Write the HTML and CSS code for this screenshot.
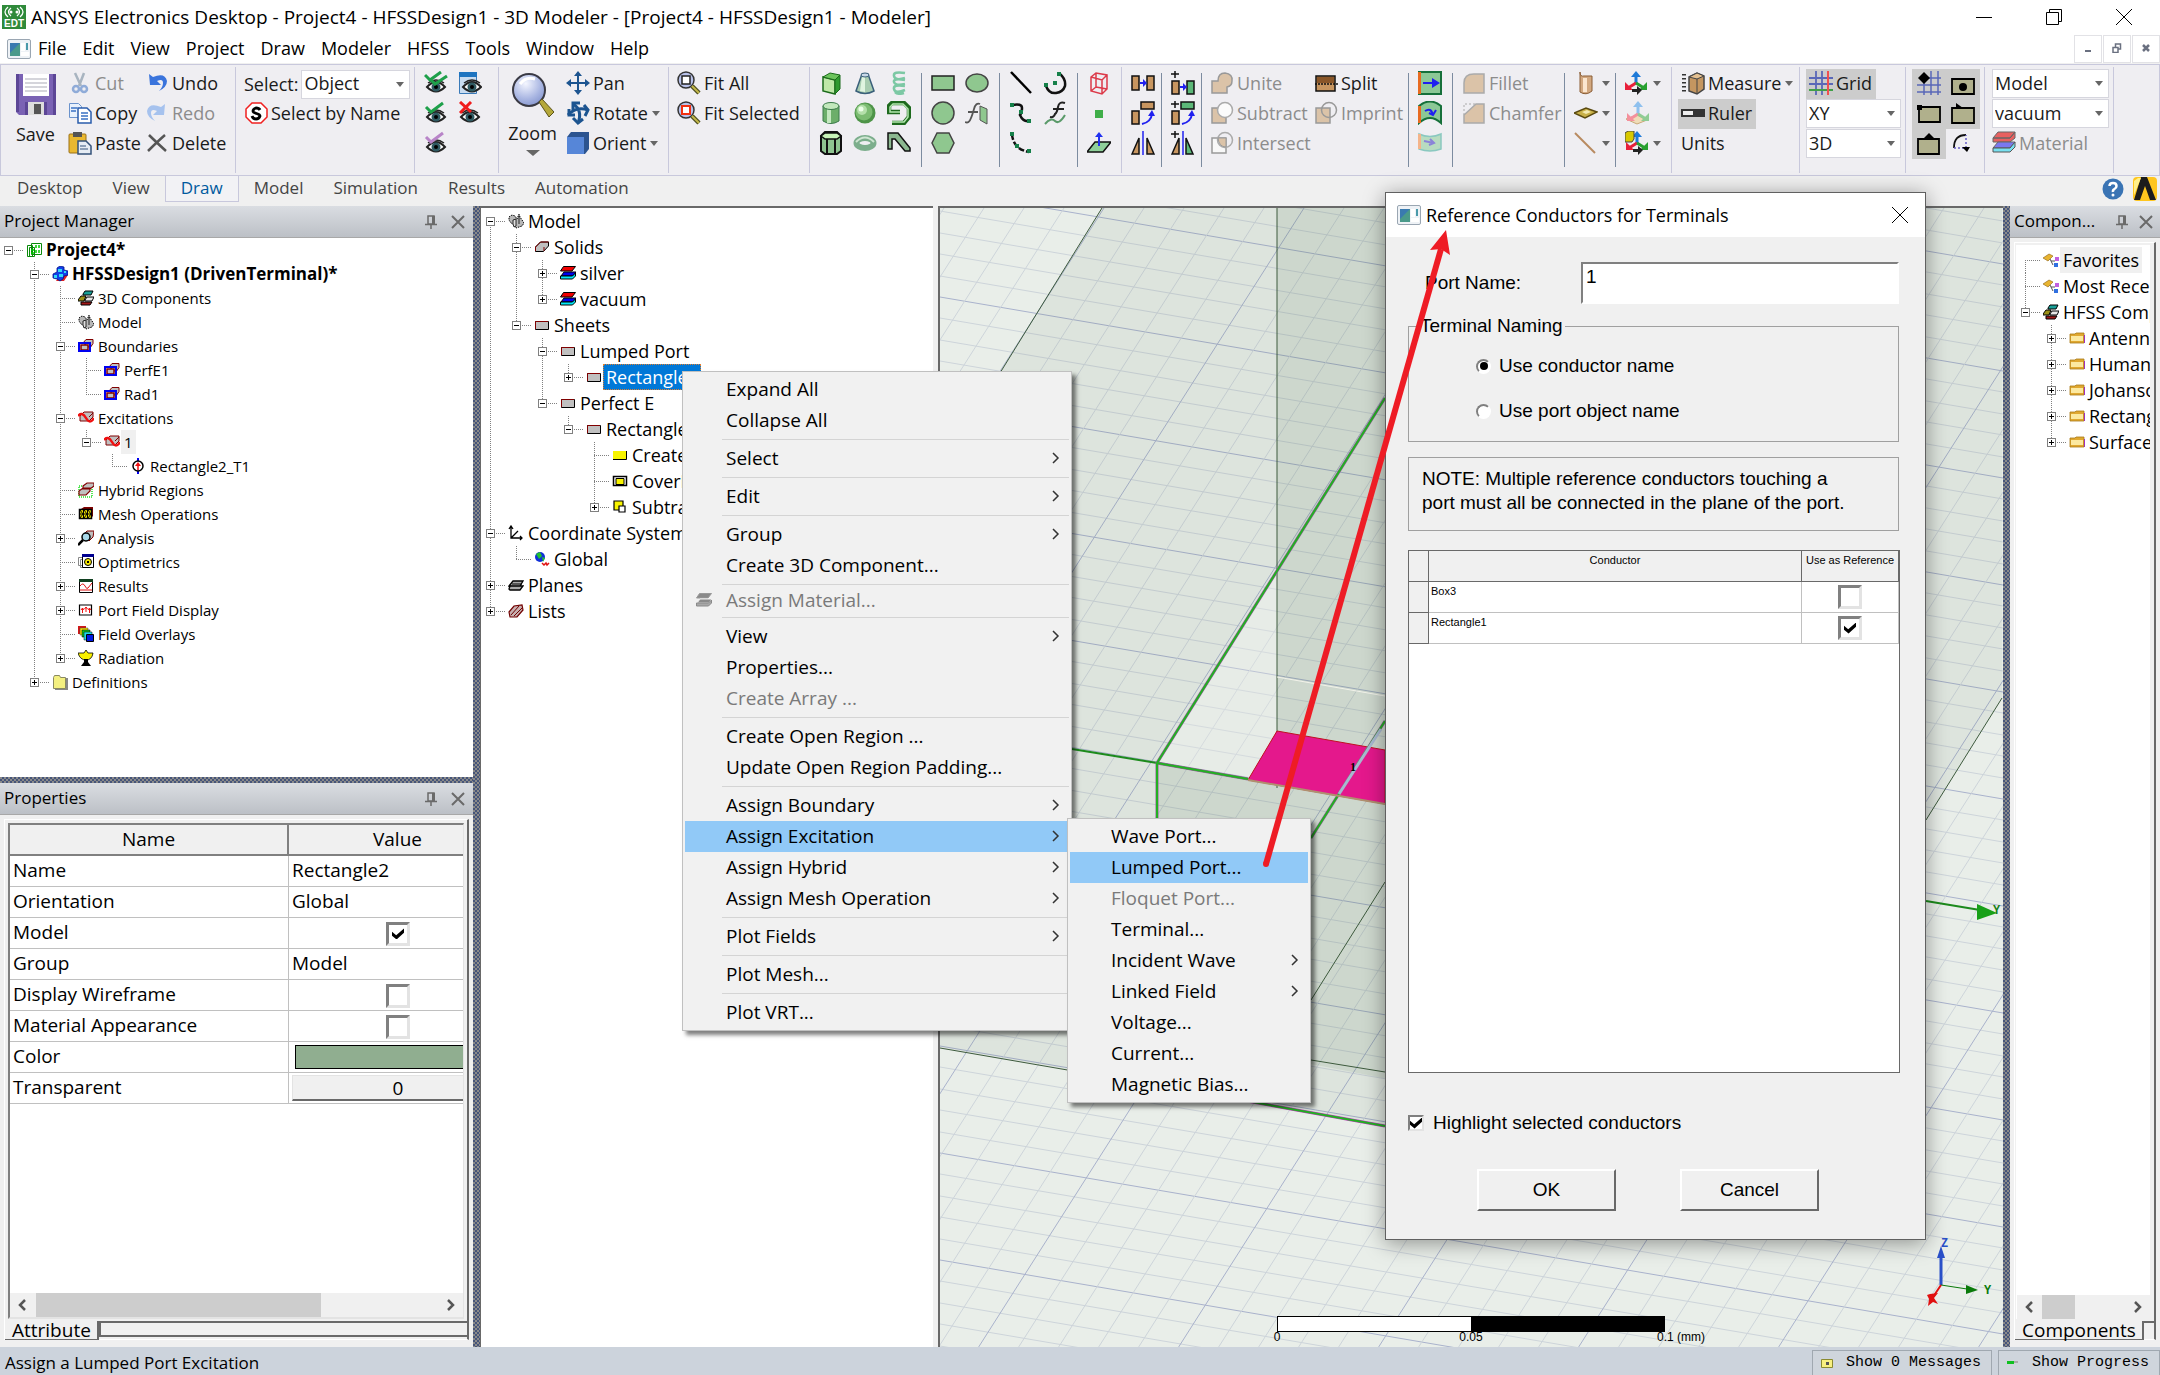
FILE: index.html
```html
<!DOCTYPE html>
<html lang="en">
<head>
<meta charset="utf-8">
<title>ANSYS Electronics Desktop - Project4 - HFSSDesign1 - 3D Modeler</title>
<link rel="stylesheet" href="styles.css">
</head>
<body>
<svg class="sprite" aria-hidden="true">
<defs>
<linearGradient id="gGreen" x1="0" x2="1"><stop offset="0" stop-color="#6aa862"/><stop offset=".4" stop-color="#d3f0cd"/><stop offset="1" stop-color="#3c8a3c"/></linearGradient>
<radialGradient id="gBall" cx=".35" cy=".3" r=".7"><stop offset="0" stop-color="#e8ffe0"/><stop offset=".5" stop-color="#86c47c"/><stop offset="1" stop-color="#357a35"/></radialGradient>
<radialGradient id="gLens" cx=".4" cy=".3" r=".8"><stop offset="0" stop-color="#f4f6ff"/><stop offset=".6" stop-color="#a9b6e2"/><stop offset="1" stop-color="#7f90cc"/></radialGradient>
<linearGradient id="gTan" x1="0" x2="1"><stop offset="0" stop-color="#c79a6c"/><stop offset=".4" stop-color="#fbe6cf"/><stop offset="1" stop-color="#8a5c34"/></linearGradient>
<g id="eye"><path d="M3 16q9-10 18 0q-9 9-18 0z" fill="#fff" stroke="#222" stroke-width="2"/><circle cx="12" cy="16" r="4.500" fill="#2f5a62"/><circle cx="12" cy="16" r="2" fill="#000"/><path d="M4 12q8-6 16 0" fill="none" stroke="#222" stroke-width="1.500"/></g>
<g id="lens"><circle cx="9" cy="9" r="8" fill="#b9c2ea" stroke="#333" stroke-width="1.500"/><path d="M15 15l7 7" stroke="#4c4c20" stroke-width="4.500"/><path d="M15 15l7 7" stroke="#c2b84a" stroke-width="2"/></g>
</defs>
<symbol id="app" viewBox="0 0 24 24"><path fill="#2f8a3a" d="M0 0h24v24H0z"/><path d="M9 3q-5 4 0 8M6 2q-6 5 0 10M15 3q5 4 0 8M18 2q6 5 0 10" fill="none" stroke="#fff" stroke-width="1.300"/><circle cx="9" cy="7" r="1.500" fill="#fff"/><circle cx="15" cy="7" r="1.500" fill="#fff"/><text x="12" y="22" font-size="10" font-weight="bold" font-family="Liberation Sans" text-anchor="middle" fill="#fff">EDT</text></symbol>
<symbol id="doc" viewBox="0 0 24 20"><rect x=".5" y=".5" width="23" height="19" rx="1.500" fill="#eef2f6" stroke="#9aa6b2"/><path fill="#4a9a8a" d="M3 4h10v13H3z"/><path fill="#3a7ab0" d="M3 4h10L3 14z"/><path fill="#fff" d="M14 4h4v8h-4zM14 13h8v4h-8z"/><path fill="#4a9aaa" d="M19 4h2v7h-2z"/></symbol>
<symbol id="save" viewBox="0 0 42 42"><path fill="#7a62b4" d="M1 0h40v41H4l-3-3z"/><path fill="#5c4696" d="M1 0h3v38H1zM38 0h3v41h-3z"/><path fill="#fff" d="M8 0h26v22H8z"/><path stroke="#c8c8d0" stroke-width="1.500" d="M10 5h22M10 9h22M10 13h22M10 17h22"/><path fill="#5c4696" d="M10 28h22v13H10z"/><path fill="#ddd" d="M13 28h16v13H13z"/><path fill="#555" d="M19 30h7v10h-7z"/></symbol>
<symbol id="cut" viewBox="0 0 24 24"><path d="M7 2l6 13M16 2l-5 13" stroke="#a8b4c0" stroke-width="2.500"/><g fill="none" stroke="#8fabd8" stroke-width="2.500"><circle cx="8" cy="18" r="3"/><circle cx="16" cy="18" r="3"/></g></symbol>
<symbol id="copy" viewBox="0 0 24 24"><path fill="#e8f1fc" stroke="#6a92cc" d="M1.500 2.500h9l3 3v11h-12z"/><path fill="#fff" stroke="#2a5cac" stroke-width="1.500" d="M10 7h9l4 4v11H10z"/><path stroke="#3a72c4" stroke-width="1.500" d="M3 7h6M3 10h5M13 12h7M13 15h7M13 18h7"/></symbol>
<symbol id="paste" viewBox="0 0 24 24"><rect x="1" y="3" width="17" height="19" rx="1" fill="#eab830" stroke="#9a7018"/><path fill="#555" d="M5 1h9v5H5z"/><path fill="#e6ecf4" stroke="#35527a" stroke-width="1.500" d="M10 10h8l5 5v8H10z"/><path stroke="#35527a" d="M12 15h6M12 18h8"/></symbol>
<symbol id="undo" viewBox="0 0 24 24"><path d="M4 3l1 11h11l-4-4q6-3 6 2 0 4-4 8 8-4 8-10-2-9-14-4z" fill="#3a74dc"/></symbol>
<symbol id="redo" viewBox="0 0 24 24"><path d="M20 3l-1 11H8l4-4q-6-3-6 2 0 4 4 8-8-4-8-10 2-9 14-4z" fill="#a6c2ee"/></symbol>
<symbol id="del" viewBox="0 0 24 24"><path d="M4 4q6 6 17 16M20 4Q13 10 3 20" stroke="#555" stroke-width="2.500" fill="none"/></symbol>
<symbol id="sname" viewBox="0 0 24 24"><path d="M8 2h9l6 6v8l-6 6H8l-6-6V8z" fill="#fff" stroke="#f02020" stroke-width="1.500"/><path d="M16 9q-1-2-4-2-3 1-3 3c0 3 7 2 7 5q-1 3-4 3-3 0-4-3" fill="none" stroke="#000" stroke-width="2.800"/></symbol>
<symbol id="eye1" viewBox="0 0 24 24"><use href="#eye"/><path d="M2 6l5 5L19 2" fill="none" stroke="#1ea04a" stroke-width="3"/></symbol>
<symbol id="eye2" viewBox="0 0 24 24"><use href="#eye"/><path d="M1 4l5 5L17 1M6 8l5 5L23 5" fill="none" stroke="#1ea04a" stroke-width="3"/></symbol>
<symbol id="eyep" viewBox="0 0 24 24"><use href="#eye"/><path d="M2 6l5 5L19 2" fill="none" stroke="#b884c8" stroke-width="3"/></symbol>
<symbol id="eyex" viewBox="0 0 24 24"><use href="#eye"/><path d="M2 1l11 10M13 1L2 12" fill="none" stroke="#f01c1c" stroke-width="3"/></symbol>
<symbol id="eyew" viewBox="0 0 24 24"><path fill="#c9dcf0" stroke="#3a7ab8" d="M1.500 1.500h17v21h-17z"/><path fill="#1e74c0" d="M1 1h18v5H1z"/><use href="#eye" x="2"/></symbol>
<symbol id="zoom" viewBox="0 0 42 46"><circle cx="17" cy="18" r="16" fill="url(#gLens)" stroke="#3a3a44" stroke-width="2"/><path d="M8 12q6-8 15-5" fill="none" stroke="#fff" stroke-width="3"/><path d="M27 30l3-3 12 13-5 5z" fill="#b5a83a" stroke="#5a521a"/></symbol>
<symbol id="pan" viewBox="0 0 24 24"><path fill="#1c5490" d="M12 0l4 5h-3v6h6V8l5 4-5 4v-3h-6v6h3l-4 5-4-5h3v-6H5v3l-5-4 5-4v3h6V5H8z"/></symbol>
<symbol id="rotate" viewBox="0 0 24 24"><g fill="none" stroke="#1c5490" stroke-width="3"><path d="M7 3q10 6 5 19M2 14Q10 5 22 9"/><path d="M7 9V2h7M7 17l5 5 5-4M3 8v6h6M18 4l4 5-3 6"/></g></symbol>
<symbol id="orient" viewBox="0 0 24 24"><path fill="#2c5490" d="M1 6l4-5h18v17l-4 5H1z"/><path fill="#5686d8" d="M1 6h17v17H1z"/></symbol>
<symbol id="fitall" viewBox="0 0 24 24"><use href="#lens"/><path fill="#fff" stroke="#222" stroke-width="1.500" d="M5 5h8v8H5z"/></symbol>
<symbol id="fitsel" viewBox="0 0 24 24"><use href="#lens"/><path fill="#fff" stroke="#f03010" stroke-width="2" d="M5 5h8v8H5z"/></symbol>
<symbol id="box" viewBox="0 0 24 24"><path fill="#bfe8a8" stroke="#1a6a1a" stroke-width="1.500" d="M4 6l12 3v14L4 20z"/><path fill="#2f9a2f" stroke="#1a6a1a" d="M16 9l5-5v14l-5 5z"/><path fill="#6cc45c" stroke="#1a6a1a" d="M4 6l7-4 10 2-5 5z"/></symbol>
<symbol id="cone" viewBox="0 0 24 24"><path fill="#a8ccb0" stroke="#3a607a" stroke-width="1.500" d="M9 3h6l6 17q-9 5-18 0z"/><path fill="#e0f4e0" d="M9 6h3v15l-5-1z"/><ellipse cx="12" cy="4" rx="4" ry="2" fill="#c8d8e8" stroke="#3a607a"/></symbol>
<symbol id="helix" viewBox="0 0 24 24"><g fill="none" stroke="#7cc8a4" stroke-width="2.500"><path d="M18 2q-12-2-11 3t11 2M18 9q-12-2-11 2t11 2M18 15q-12-2-11 3t11 1M17 22q-6 2-9-1"/></g></symbol>
<symbol id="cyl" viewBox="0 0 24 24"><path fill="#6cae6a" stroke="#3a7a4a" d="M4 5v15q8 5 16 0V5z"/><path fill="#c4e8c0" d="M8 7h4v15H8z"/><ellipse cx="12" cy="5" rx="8" ry="3.500" fill="#c2e8bc" stroke="#3a7a4a"/></symbol>
<symbol id="sphere" viewBox="0 0 24 24"><circle cx="12" cy="12" r="10.500" fill="#4e9448"/><circle cx="11" cy="11" r="8.500" fill="#7cbc72"/><circle cx="9" cy="9" r="5" fill="#b4e0aa"/><circle cx="8" cy="8" r="2.500" fill="#ecffe8"/></symbol>
<symbol id="spiral" viewBox="0 0 24 24"><path d="M13 11H2V5l3-3h12l5 5v9l-5 6H5" fill="none" stroke="#1e6a1e" stroke-width="4.500"/><path d="M13 11H3V6l3-3h10l5 5v8l-4 5H5" fill="none" stroke="#b4e8b0" stroke-width="1.500"/></symbol>
<symbol id="prism" viewBox="0 0 24 24"><path fill="#8ec490" stroke="#111" stroke-width="2" d="M2 5v15l4 3h12l4-3V5l-4-4H6z"/><path fill="#c8f4b8" stroke="#111" stroke-width="1.500" d="M2 5l4-3h12l4 3-4 3H6z"/><path stroke="#111" stroke-width="2" d="M8 8v15M16 8v15"/></symbol>
<symbol id="torus" viewBox="0 0 24 24"><ellipse cx="12" cy="12" rx="8.500" ry="5" fill="none" stroke="#7cae8c" stroke-width="6"/><path d="M3 11q9-9 18 0" fill="none" stroke="#cfe6d2" stroke-width="2"/></symbol>
<symbol id="bend" viewBox="0 0 24 24"><path fill="#8cb890" stroke="#111" stroke-width="1.500" d="M1 2h10l12 15v3h-5L8 8H5v10H1z"/></symbol>
<symbol id="rect" viewBox="0 0 24 24"><path fill="#8fc78f" stroke="#222" stroke-width="1.500" d="M1 5h22v14H1z"/></symbol>
<symbol id="ellipse" viewBox="0 0 24 24"><ellipse cx="12" cy="12" rx="11" ry="9" fill="#8fc78f" stroke="#444" stroke-width="1.500"/></symbol>
<symbol id="circle" viewBox="0 0 24 24"><circle cx="12" cy="12" r="11" fill="#8fc78f" stroke="#444" stroke-width="1.500"/></symbol>
<symbol id="hex" viewBox="0 0 24 24"><path d="M6 2h12l5 10-5 10H6L1 12z" fill="#8fc78f" stroke="#444" stroke-width="1.500"/></symbol>
<symbol id="fx" viewBox="0 0 24 24"><path d="M15 3q-4-2-6 5T6 17q-2 6-6 4M3 11h10" fill="none" stroke="#555" stroke-width="1.800"/><path d="M15 5l7 3v15l-7-4z" fill="#8fc78f" stroke="#555"/></symbol>
<symbol id="line" viewBox="0 0 24 24"><path d="M2 1l20 21" stroke="#000" stroke-width="2.500"/></symbol>
<symbol id="arc" viewBox="0 0 24 24"><path d="M3 15q3 8 10 7t9-7q1-7-5-12" fill="none" stroke="#111" stroke-width="2.500"/><path fill="#16804a" d="M1 12h4v4H1zM10 10h4v4h-4zM14 1h4v4h-4z"/></symbol>
<symbol id="spline" viewBox="0 0 24 24"><path d="M3 4q10-2 10 3t-2 7q3 7 9 6" fill="none" stroke="#111" stroke-width="2.500"/><path fill="#16804a" d="M1 2h4v4H1zM10 9h4v4h-4zM18 18h4v4h-4z"/></symbol>
<symbol id="arc3" viewBox="0 0 24 24"><path d="M3 3q1 15 17 18" fill="none" stroke="#111" stroke-width="2.500" stroke-dasharray="6 2"/><path fill="#16804a" d="M1 1h4v4H1zM6 13h4v4H6zM18 18h4v4h-4z"/></symbol>
<symbol id="eq" viewBox="0 0 24 24"><path d="M22 2q-6-2-7 4t-3 7q-1 4-5 3M10 8h11" fill="none" stroke="#222" stroke-width="2"/><path d="M2 23q6-7 10-3t10-6" fill="none" stroke="#5a9a6a" stroke-width="2"/></symbol>
<symbol id="region" viewBox="0 0 24 24"><path d="M4 6l5-4 11 2v14l-5 5-11-3zM4 6l11 3 5-5M15 9v14M9 2v14l-5 4M9 16l11 2" fill="none" stroke="#dc3a4a" stroke-width="1.500"/></symbol>
<symbol id="point" viewBox="0 0 24 24"><path fill="#3fae49" d="M8 9h8v8H8z"/></symbol>
<symbol id="plane" viewBox="0 0 24 24"><path fill="#8fd09a" stroke="#111" stroke-width="1.500" d="M0 21l8-10h16l-8 10z"/><path d="M12 15V5" stroke="#2030f0" stroke-width="2"/><path fill="#2030f0" d="M12 1l4 5H8z"/></symbol>
<symbol id="move" viewBox="0 0 24 24"><path fill="#c89660" stroke="#111" stroke-width="1.500" d="M1 5h7v14H1zM16 5h7v14h-7z"/><path fill="#2020f0" d="M9 11h3V8l4 4-4 4v-3H9z"/></symbol>
<symbol id="rot" viewBox="0 0 24 24"><path fill="#c89660" stroke="#111" stroke-width="1.500" d="M1 10h7v13H1zM10 1h13v7H10z"/><path d="M11 23q9-2 10-10" fill="none" stroke="#2020f0" stroke-width="2"/><path fill="#2020f0" d="M21 9l3 6h-7z"/></symbol>
<symbol id="mirror" viewBox="0 0 24 24"><path fill="#c89660" stroke="#111" stroke-width="1.500" d="M8 7v16H1zM16 7v16h7z"/><path d="M12 0v24" stroke="#2020f0" stroke-width="1.500"/></symbol>
<symbol id="dmove" viewBox="0 0 24 24"><path fill="#c89660" stroke="#111" stroke-width="1.500" d="M1 10h7v13H1z"/><path fill="#5cb878" stroke="#111" stroke-width="1.500" d="M16 10h7v13h-7z"/><path fill="#2020f0" d="M9 15h3v-3l4 4-4 4v-3H9z"/><path stroke="#111" stroke-width="1.500" d="M4 0v7M0 3h8"/></symbol>
<symbol id="drot" viewBox="0 0 24 24"><path fill="#c89660" stroke="#111" stroke-width="1.500" d="M1 10h7v13H1z"/><path fill="#5cb878" stroke="#111" stroke-width="1.500" d="M10 1h13v7H10z"/><path d="M11 23q9-2 10-10" fill="none" stroke="#2020f0" stroke-width="2"/><path fill="#2020f0" d="M21 9l3 6h-7z"/><path stroke="#111" stroke-width="1.500" d="M4 0v7M0 3h8"/></symbol>
<symbol id="dmirror" viewBox="0 0 24 24"><path fill="#c89660" stroke="#111" stroke-width="1.500" d="M8 7v16H1z"/><path fill="#5cb878" stroke="#111" stroke-width="1.500" d="M15 7v16h7z"/><path d="M12 0v24" stroke="#2020f0" stroke-width="1.500"/><path stroke="#111" stroke-width="1.500" d="M4 0v7M0 3h8"/></symbol>
<symbol id="unite" viewBox="0 0 24 24"><path fill="#dbc3a8" stroke="#999" stroke-width="1.500" d="M2 10h6q0-8 7-8 8 1 7 8 0 5-5 6v6H2z"/></symbol>
<symbol id="subtract" viewBox="0 0 24 24"><path fill="#dbc3a8" stroke="#999" stroke-width="1.500" d="M2 7h14v15H2z"/><circle cx="15" cy="9" r="7.500" fill="#fbfbfb" stroke="#aaa" stroke-width="1.500"/></symbol>
<symbol id="intersect" viewBox="0 0 24 24"><path fill="#f8f8f8" stroke="#999" stroke-width="1.500" d="M2 7h14v15H2z"/><circle cx="15" cy="9" r="7.500" fill="none" stroke="#aaa" stroke-width="1.500"/><path fill="#dbc3a8" stroke="#999" d="M8 7h8v9q-7 0-8-9z"/></symbol>
<symbol id="split" viewBox="0 0 24 24"><path fill="#c89660" stroke="#111" stroke-width="1.500" d="M2 5h19v15H2z"/><path fill="#8a5628" d="M3 6h17v6H3z"/><path stroke="#111" stroke-width="1.500" stroke-dasharray="2 1" d="M1 13h23"/></symbol>
<symbol id="imprint" viewBox="0 0 24 24"><path fill="#dbc3a8" stroke="#999" stroke-width="1.500" d="M2 7h14v15H2z"/><circle cx="15" cy="9" r="7.500" fill="none" stroke="#999" stroke-width="1.500"/></symbol>
<symbol id="sheet1" viewBox="0 0 24 24"><path fill="#8cc896" stroke="#16703a" stroke-width="2" d="M1 1h22v22H1z"/><path fill="#e86a20" d="M0 1h3v22H0z"/><path fill="#2020f0" d="M5 11h9V7l8 5-8 5v-4H5z"/></symbol>
<symbol id="sheet2" viewBox="0 0 24 24"><path fill="#8cc896" stroke="#16703a" stroke-width="2" d="M1 5q11-9 22 0v17q-11-10-22 0z"/><path fill="#e86a20" d="M0 5h3v17H0z"/><path fill="none" stroke="#2020f0" stroke-width="2" d="M7 10q6-4 8 4M18 9l-3 5-4-2"/></symbol>
<symbol id="sheet3" viewBox="0 0 24 24"><path fill="#b8dcc0" stroke="#8ac8c0" stroke-width="1.500" d="M1 3q11 5 22 0v15q-11 4-22 0z"/><path fill="#f4b48a" d="M0 3h3v15H0z"/><path fill="none" stroke="#8a84d8" stroke-width="2" d="M6 10l10 2M12 8l4 4-5 2"/></symbol>
<symbol id="fillet" viewBox="0 0 24 24"><path fill="#dbc3a8" stroke="#aaa" stroke-width="1.500" d="M2 22V12q0-9 10-9h10v19z"/></symbol>
<symbol id="chamfer" viewBox="0 0 24 24"><path fill="#dbc3a8" stroke="#aaa" stroke-width="1.500" d="M2 22v-8L14 3h8v19z"/><path stroke="#aaa" stroke-dasharray="2 2" fill="none" d="M2 14V3h12"/></symbol>
<symbol id="surf" viewBox="0 0 24 24"><path fill="#d2a880" stroke="#8a5c34" d="M6 1q0 5 4 4h8v15q-6 5-12 1z"/><path fill="#fbe6cf" d="M9 7h4v14H9z"/></symbol>
<symbol id="face" viewBox="0 0 24 24"><path fill="#c8b048" stroke="#5a4a10" stroke-width="1.500" d="M0 12l12-5 11 4-12 6z"/><path fill="#f4eab0" d="M8 11l5-2 4 2-5 2z"/></symbol>
<symbol id="edge" viewBox="0 0 24 24"><path stroke="#b88a60" stroke-width="2" d="M1 2l20 20"/></symbol>
<symbol id="cs1" viewBox="0 0 24 24"><path d="M11 12V4" stroke="#1e7ad8" stroke-width="3"/><path fill="#1e7ad8" d="M11 0l5 6H6z"/><path d="M11 12l-8 5" stroke="#e8203a" stroke-width="3"/><path fill="#e8203a" d="M0 11v8h8z"/><path d="M11 12l8 5" stroke="#28a030" stroke-width="3"/><path fill="#28a030" d="M22 11v8h-8z"/><path fill="#222" d="M7 18h5v-3l5 4-5 5v-3H7z"/></symbol>
<symbol id="cs2" viewBox="0 0 24 24"><path fill="#f0dcb8" stroke="#c8a878" d="M1 18l11-4 10 5-10 4z"/><path d="M13 14V4" stroke="#8ec0ee" stroke-width="3"/><path fill="#8ec0ee" d="M13 0l5 6H8z"/><path d="M13 13l-8 5" stroke="#f4909c" stroke-width="3"/><path fill="#f4909c" d="M2 12v8h8z"/><path d="M13 13l8 5" stroke="#90cc94" stroke-width="3"/><path fill="#90cc94" d="M24 12v8h-8z"/></symbol>
<symbol id="cs3" viewBox="0 0 24 24"><path d="M12 12V4" stroke="#1e7ad8" stroke-width="3"/><path fill="#1e7ad8" d="M12 0l5 6H7z"/><path d="M12 12l-8 5" stroke="#e8203a" stroke-width="3"/><path fill="#e8203a" d="M1 11v8h8z"/><path d="M12 12l8 5" stroke="#28a030" stroke-width="3"/><path fill="#28a030" d="M23 11v8h-8z"/><path fill="#222" d="M8 18h5v-3l5 4-5 5v-3H8z"/><path fill="#d8c800" stroke="#444" d="M0 2l3-2h6v8l-2 3H0z"/></symbol>
<symbol id="measure" viewBox="0 0 24 24"><path d="M3 3v18" stroke="#333" stroke-width="4" stroke-dasharray="1.500 2.500"/><path fill="#c49660" stroke="#444" stroke-width="1.500" d="M8 6l8-4 7 3v13l-7 5-8-3z"/><path fill="#e4c090" stroke="#444" d="M8 6l8-4 7 3-7 3z"/><path stroke="#444" d="M16 8v15"/></symbol>
<symbol id="ruler" viewBox="0 0 24 24"><path fill="#333" d="M0 8h24v8H0z"/><path fill="#eee" d="M2 10h10v4H2z"/></symbol>
<symbol id="grid" viewBox="0 0 24 24"><path stroke="#5a68b8" stroke-width="1.800" d="M0 7h24M0 13h24M7 0v24M13 0v24"/><path stroke="#40a048" stroke-width="2" d="M0 19h24"/><path stroke="#f05050" stroke-width="2" d="M19 0v24"/></symbol>
<symbol id="snap1" viewBox="0 0 24 24"><path stroke="#5a68b8" stroke-width="1.500" d="M0 14h24M0 21h24M12 7h12M7 12v12M14 0v24M21 0v24"/><path d="M7 1l6 6-6 6-6-6z"/></symbol>
<symbol id="snap2" viewBox="0 0 24 24"><path fill="#b0b08c" stroke="#000" stroke-width="1.800" d="M1 8h22v15H1z"/><circle cx="12" cy="16" r="4"/></symbol>
<symbol id="snap3" viewBox="0 0 24 24"><path fill="#b0b08c" stroke="#000" stroke-width="1.800" d="M2 6h21v15H2z"/><path d="M0 4h5v5H0z"/></symbol>
<symbol id="snap4" viewBox="0 0 24 24"><path fill="#b0b08c" stroke="#000" stroke-width="1.800" d="M1 7h22v15H1z"/><path d="M5 7V2l7 5z"/></symbol>
<symbol id="snap5" viewBox="0 0 24 24"><path fill="#b0b08c" stroke="#000" stroke-width="1.800" d="M1 8h21v15H1z"/><path d="M6 8l6-6 6 6z"/></symbol>
<symbol id="snap6" viewBox="0 0 24 24"><path d="M3 17Q3 4 15 4" fill="none" stroke="#111" stroke-width="1.800"/><path d="M3 17h12V4" fill="none" stroke="#6a60c8" stroke-width="1.500" stroke-dasharray="2 2"/><path d="M11 16h8l-3 5z"/></symbol>
<symbol id="material" viewBox="0 0 24 24"><path fill="#e86060" stroke="#666" d="M1 7l5-6h17l-5 6zM1 7v4h17l5-4V1l-5 6z"/><path fill="#7a78f0" stroke="#666" d="M1 17l5-6h17l-5 6z"/><path fill="#78e0f0" stroke="#555" d="M1 17h17l5-6v5l-5 5H1z"/></symbol>
<symbol id="help" viewBox="0 0 24 24"><circle cx="12" cy="12" r="10.500" fill="#3a74b4"/><path d="M8.500 9q0-3 3.500-3t3.500 3q0 2-2 3t-1.500 3" fill="none" stroke="#fff" stroke-width="2.500"/><circle cx="12" cy="18" r="1.500" fill="#fff"/></symbol>
<symbol id="ansys" viewBox="0 0 24 24"><rect width="24" height="24" rx="4" fill="#ffc61e"/><path fill="#1c1c1c" d="M8 0h6l9 23h-6L12 9 7 23H1z"/><path fill="#fff08a" d="M1 4l4-3h3L1 18z"/></symbol>
<symbol id="t-proj" viewBox="0 0 16 16"><path fill="#fff" stroke="#0a8a0a" d="M5.500 1.500h10v11h-10zM1.500 3.500h5v11h-5zM3.500 5.500h5v9h-5z"/><path stroke="#0c0" stroke-width="1.500" d="M10 3v3M13 3v3M10 8v3M13 8v3M5 8h3M5 11h3"/></symbol>
<symbol id="t-hfss" viewBox="0 0 16 16"><path fill="#e02020" d="M8 9h8l-4 6H4z"/><path fill="#1040e8" stroke="#00108a" stroke-width=".8" d="M5 2l3-2 4 1v3l4 1v4l-4 1-1 3-3 2-3-2-4-1V8l4-2z"/><path fill="#30d8f8" d="M6 3h4v3H6zM2 9h3v3H2zM7 8h4v3H7zM12 5h2v2h-2z"/></symbol>
<symbol id="t-comps" viewBox="0 0 16 16"><path stroke="#000" fill="#18a098" d="M5 4l2-3h8l-2 4H5z"/><path stroke="#000" fill="#9a9018" d="M0 10l3-4h5l-2 5H0z"/><path stroke="#000" fill="#e8e8e8" d="M7 10l2-3h7l-2 4H7z"/><path stroke="#000" fill="#a01818" d="M3 14v-2h11l-2 3H3z"/></symbol>
<symbol id="t-model" viewBox="0 0 16 16"><path stroke="#000" stroke-dasharray="1.500 1" fill="#b8b8b8" d="M1 4l3-2 3 1 2 3 2-5 1 3 4 6-2 3-6 2-3-4-2-1-2-3z"/><path stroke="#000" fill="#ddd" stroke-width=".8" d="M5 7l3-1v7l-2 1-1-3zM11 3v8"/></symbol>
<symbol id="t-bound" viewBox="0 0 16 16"><path fill="#c0c0c0" stroke="#800000" d="M5 5l3-3.500h7v4L12 10z"/><path fill="#c0c0c0" stroke="#800000" stroke-width="1.500" d="M3 7h7v5H3z"/><path fill="none" stroke="#0000f0" stroke-width="2" d="M1 5h11v8H1z"/></symbol>
<symbol id="t-exc" viewBox="0 0 16 16"><path fill="#c0c0c0" stroke="#800000" d="M2 6l4-4h9v5l-4 4H2z"/><path d="M15 3l-4 4" stroke="#800000"/><path d="M0 6q4-5 8 2t8 0" fill="none" stroke="#f01010" stroke-width="2.500"/></symbol>
<symbol id="t-term" viewBox="0 0 16 16"><path stroke="#0000f0" stroke-width="2" d="M8 0v16"/><circle cx="8" cy="8" r="5" fill="#fff" stroke="#000" stroke-width="1.500"/><path stroke="#f01010" stroke-width="1.500" d="M8 12V6"/><path fill="#f01010" d="M8 4l3 4H5z"/></symbol>
<symbol id="t-hyb" viewBox="0 0 16 16"><path fill="none" stroke="#20e020" stroke-dasharray="1 1" stroke-width="1.500" d="M1 4h13v11H1z"/><path fill="#c0c0c0" stroke="#800000" stroke-width="1.200" d="M5 4l4-3h7v3l-4 3H5zM1 12V9l4-3h7v3l-4 4H1z"/></symbol>
<symbol id="t-mesh" viewBox="0 0 16 16"><path fill="#800000" d="M3 3l3-2h9v9l-2 2z"/><path fill="#f8e800" stroke="#000" stroke-width="1.500" d="M1.500 3.500h12v9h-12z"/><path stroke="#000" d="M1 8h13M5.500 3v10M9.500 3v10M2 4l3 4-3 4M6 12l3-4-3-4M10 4l3 4-3 4" fill="none"/></symbol>
<symbol id="t-ana" viewBox="0 0 16 16"><path fill="#c0c0c0" stroke="#800000" d="M5 5l4-4h7l-1 6-4 4z"/><circle cx="8" cy="7" r="4" fill="#a8d8e8" stroke="#000" stroke-width="1.500"/><path stroke="#000" stroke-width="2.500" d="M5 10l-5 5"/></symbol>
<symbol id="t-opt" viewBox="0 0 16 16"><path fill="#fff" stroke="#888" d="M.5 3.500h7v8h-7zM2.500 5.500h7v8h-7z"/><path fill="#fff" stroke="#000" d="M4.500 1.500h11v12h-11z"/><path fill="#000090" d="M4 0h12v3H4z"/><circle cx="10" cy="8" r="3.500" fill="#f8e800" stroke="#000"/><path fill="#000" d="M9 7h2v2H9z"/></symbol>
<symbol id="t-res" viewBox="0 0 16 16"><path fill="#fff" stroke="#000" d="M1.500 1.500h13v13h-13z"/><path fill="#104020" d="M1 1h14v3H1z"/><path d="M2 8q3-4 5 0t3 2l4-5M2 12h12" fill="none" stroke="#e01010"/></symbol>
<symbol id="t-port" viewBox="0 0 16 16"><path fill="#fff" stroke="#000" stroke-width="1.200" d="M1.500 3h12v10h-12z"/><path stroke="#f01010" fill="none" d="M4.500 11V6M3 8l1.500-2L6 8M8 10V5M6.500 7L8 5l1.500 2M11.500 11V6M10 8l1.500-2L13 8"/></symbol>
<symbol id="t-over" viewBox="0 0 16 16"><path fill="#d01818" d="M0 0h8v8H0z"/><path fill="#f0e000" stroke="#444" stroke-width=".5" d="M2 2h8v7H2z"/><path fill="#10c020" stroke="#000" stroke-width=".5" d="M4 4h8v7H4z"/><path fill="#20d8e8" stroke="#000" stroke-width=".5" d="M6 6h8v8H6z"/><path fill="#0018e0" stroke="#000" d="M8.500 8.500h7v7h-7z"/></symbol>
<symbol id="t-rad" viewBox="0 0 16 16"><path fill="#f8f000" stroke="#000" stroke-width=".8" d="M6 3l2-3 2 3h5q-1 7-7 7T0 3z"/><path d="M6 9h4v3l3 4H3l3-4z"/></symbol>
<symbol id="t-fold" viewBox="0 0 16 16"><path fill="#888" d="M3 4h13v12H3z"/><path fill="#f4f080" stroke="#8a8a60" d="M1.500 3.500l1-2h5l1 2h5v11h-12z"/></symbol>
<symbol id="t-solid" viewBox="0 0 16 16"><path fill="#c0c0c0" stroke="#000" d="M1.500 12.500V8l5-5h8v4l-5 5.500z"/><path stroke="#800000" fill="none" d="M1.500 12V8l5-5h8M10 12V8"/></symbol>
<symbol id="t-mat" viewBox="0 0 16 16"><path fill="#f00000" stroke="#000" d="M.5 6l3-4.500h12L12 6z"/><path fill="#0000f0" stroke="#000" d="M1 11l3-4h12l-3 4z"/><path fill="#00e8f8" stroke="#000" d="M.5 11h12l3-3v3l-3 3H.500z"/></symbol>
<symbol id="t-sheet" viewBox="0 0 16 16"><path fill="#c0c0c0" stroke="#000" d="M1.500 4.500h13v8h-13z"/><path fill="none" stroke="#800000" d="M1.500 12V4.500H14"/></symbol>
<symbol id="t-create" viewBox="0 0 16 16"><path fill="#f8f400" d="M1 4h13v8H1z"/><path fill="none" stroke="#000" d="M14.500 4v8.500H1"/></symbol>
<symbol id="t-cover" viewBox="0 0 16 16"><path fill="#fff" stroke="#000" stroke-width="1.500" d="M1.500 3.500h13v9h-13z"/><path fill="#f8f400" stroke="#000" d="M4 5.500h8v6H4z"/></symbol>
<symbol id="t-sub" viewBox="0 0 16 16"><path fill="#f8f400" stroke="#000" stroke-width="1.200" d="M2 2h9v9H2z"/><path fill="#fff" stroke="#000" stroke-width="1.200" d="M7 7h6v6H7z"/></symbol>
<symbol id="t-cs" viewBox="0 0 16 16"><path fill="none" stroke="#000" stroke-width="1.300" d="M3 1v12h11M3 13l7-7M1 4l2-3 2 3M12 11l2 2-2 2"/></symbol>
<symbol id="t-glob" viewBox="0 0 16 16"><circle cx="6" cy="6" r="5" fill="#1030d8"/><path fill="#20c030" d="M2 3l4-2 2 4-3 3zM8 6l3 1-2 4z"/><path d="M8 12l2 2 2-2 1 2 2-2" stroke="#e01010" fill="none" stroke-width="1.500"/></symbol>
<symbol id="t-plane" viewBox="0 0 16 16"><path fill="#aaa" stroke="#000" stroke-width="1.300" d="M1 9l4-5h10l-3 5zM1 12l1-3h13l-3 4H2z"/><path stroke="#000" d="M4 7h10"/></symbol>
<symbol id="t-list" viewBox="0 0 16 16"><path fill="#c8b0b0" stroke="#700000" stroke-width="1.200" d="M1 9l5-6 8-1 1 5-6 7H2z"/><path stroke="#700000" d="M3 12l8-9M6 13l8-8"/></symbol>
<symbol id="t-fav" viewBox="0 0 16 16"><path fill="#e8b430" stroke="#8a6010" stroke-width=".6" d="M0 6l6-4 4 2-5 5z"/><path fill="none" stroke="#555" d="M7 7l3 6M8 9h4"/><path fill="#c060e0" d="M12 5h4v4h-4z"/><path fill="#3070e0" d="M11 11h4v4h-4z"/></symbol>
<symbol id="t-dir" viewBox="0 0 16 16"><path fill="#e0a830" stroke="#a87818" stroke-width=".8" d="M1 13V4h5l1-1h8v10z"/><path fill="#fce9a0" d="M2 6h12v5H2z"/><path stroke="#a030c0" d="M15.500 5v8"/></symbol>
<symbol id="t-matg" viewBox="0 0 16 16"><path fill="#8a8a8a" stroke="#999" d="M.5 6l3-4.500h12L12 6z"/><path fill="#8a8a8a" stroke="#f0f0f0" d="M1 11l3-4h12l-3 4z"/><path fill="#a8a8a8" stroke="#8a8a8a" d="M.5 11h12l3-3v3l-3 3H.500z"/></symbol>
<symbol id="pin" viewBox="0 0 12 16"><path d="M3 2h6v8H3zM0 10.500h12M6 10v5" fill="none" stroke="#6a6a6a" stroke-width="1.500"/><path fill="#6a6a6a" d="M7 2h3v8H7z"/></symbol>
<symbol id="x" viewBox="0 0 16 16"><path d="M2 2l12 12M14 2L2 14" stroke="#6a6a6a" stroke-width="2"/></symbol>
<symbol id="chev" viewBox="0 0 8 12"><path d="M1 1l5 5-5 5" fill="none" stroke="#333" stroke-width="1.500"/></symbol>
</svg>

<header class="titlebar">
  <svg class="i24"><use href="#app"/></svg>
  <h1>ANSYS Electronics Desktop - Project4 - HFSSDesign1 - 3D Modeler - [Project4 - HFSSDesign1 - Modeler]</h1>
  <div class="winbtns">
    <button aria-label="Minimize"><svg width="16" height="16"><path d="M0 8.500h16" stroke="#000"/></svg></button>
    <button aria-label="Restore"><svg width="16" height="16"><path d="M.5 3.500h12v12H.500zM3.500 3V.5h12v12H13" fill="none" stroke="#000"/></svg></button>
    <button aria-label="Close"><svg width="16" height="16"><path d="M0 0l16 16M16 0L0 16" stroke="#000"/></svg></button>
  </div>
</header>
<nav class="menubar">
  <svg class="docicon"><use href="#doc"/></svg>
  <button>File</button><button>Edit</button><button>View</button><button>Project</button><button>Draw</button><button>Modeler</button><button>HFSS</button><button>Tools</button><button>Window</button><button>Help</button>
  <div class="mdibtns">
    <button aria-label="Minimize document"><svg width="10" height="10"><path d="M2 8h6" stroke="#6a7080" stroke-width="2"/></svg></button>
    <button aria-label="Restore document"><svg width="10" height="10"><path d="M1 4.500h5v5H1zM3.500 4V1h5v5H6" fill="none" stroke="#6a7080" stroke-width="1.500"/></svg></button>
    <button aria-label="Close document"><svg width="10" height="10"><path d="M2 2l6 6M8 2L2 8" stroke="#6a7080" stroke-width="2.500"/></svg></button>
  </div>
</nav>

<section class="ribbon">
  <div class="grp g-edit">
    <button class="big"><svg width="42" height="42"><use href="#save"/></svg>Save</button>
    <button disabled><svg class="i24"><use href="#cut"/></svg>Cut</button>
    <button><svg class="i24"><use href="#copy"/></svg>Copy</button>
    <button><svg class="i24"><use href="#paste"/></svg>Paste</button>
    <button><svg class="i24"><use href="#undo"/></svg>Undo</button>
    <button disabled><svg class="i24"><use href="#redo"/></svg>Redo</button>
    <button><svg class="i24"><use href="#del"/></svg>Delete</button>
  </div>
  <div class="grp g-select">
    <div class="field"><label for="selmode">Select:</label><span class="combo"><select id="selmode"><option>Object</option></select></span></div>
    <button><svg class="i24"><use href="#sname"/></svg>Select by Name</button>
  </div>
  <div class="grp icons g-eyes">
    <button aria-label="Show all"><svg class="i24"><use href="#eye2"/></svg></button>
    <button aria-label="Show selection"><svg class="i24"><use href="#eye1"/></svg></button>
    <button aria-label="Toggle visibility"><svg class="i24"><use href="#eyep"/></svg></button>
    <button aria-label="Visibility dialog"><svg class="i24"><use href="#eyew"/></svg></button>
    <button aria-label="Hide selection"><svg class="i24"><use href="#eyex"/></svg></button>
  </div>
  <div class="grp g-zoom">
    <button class="big"><svg width="42" height="46"><use href="#zoom"/></svg>Zoom<i class="caret wide"></i></button>
    <button><svg class="i24"><use href="#pan"/></svg>Pan</button>
    <button><svg class="i24"><use href="#rotate"/></svg>Rotate<i class="caret"></i></button>
    <button><svg class="i24"><use href="#orient"/></svg>Orient<i class="caret"></i></button>
  </div>
  <div class="grp g-fit">
    <button><svg class="i24"><use href="#fitall"/></svg>Fit All</button>
    <button><svg class="i24"><use href="#fitsel"/></svg>Fit Selected</button>
  </div>
  <div class="grp icons sub">
    <button aria-label="Box"><svg class="i24"><use href="#box"/></svg></button>
    <button aria-label="Cylinder"><svg class="i24"><use href="#cyl"/></svg></button>
    <button aria-label="Polyhedron"><svg class="i24"><use href="#prism"/></svg></button>
    <button aria-label="Cone"><svg class="i24"><use href="#cone"/></svg></button>
    <button aria-label="Sphere"><svg class="i24"><use href="#sphere"/></svg></button>
    <button aria-label="Torus"><svg class="i24"><use href="#torus"/></svg></button>
    <button aria-label="Helix"><svg class="i24"><use href="#helix"/></svg></button>
    <button aria-label="Spiral"><svg class="i24"><use href="#spiral"/></svg></button>
    <button aria-label="Bondwire"><svg class="i24"><use href="#bend"/></svg></button>
  </div>
  <div class="grp icons sub">
    <button aria-label="Rectangle"><svg class="i24"><use href="#rect"/></svg></button>
    <button aria-label="Circle"><svg class="i24"><use href="#circle"/></svg></button>
    <button aria-label="Polygon"><svg class="i24"><use href="#hex"/></svg></button>
    <button aria-label="Ellipse"><svg class="i24"><use href="#ellipse"/></svg></button>
    <button aria-label="Equation surface"><svg class="i24"><use href="#fx"/></svg></button>
  </div>
  <div class="grp icons sub">
    <button aria-label="Line"><svg class="i24"><use href="#line"/></svg></button>
    <button aria-label="Spline"><svg class="i24"><use href="#spline"/></svg></button>
    <button aria-label="Three point arc"><svg class="i24"><use href="#arc3"/></svg></button>
    <button aria-label="Center arc"><svg class="i24"><use href="#arc"/></svg></button>
    <button aria-label="Equation curve"><svg class="i24"><use href="#eq"/></svg></button>
  </div>
  <div class="grp icons">
    <button aria-label="Region"><svg class="i24"><use href="#region"/></svg></button>
    <button aria-label="Point"><svg class="i24"><use href="#point"/></svg></button>
    <button aria-label="Plane"><svg class="i24"><use href="#plane"/></svg></button>
  </div>
  <div class="grp icons tight sub">
    <button aria-label="Move"><svg class="i24"><use href="#move"/></svg></button>
    <button aria-label="Rotate object"><svg class="i24"><use href="#rot"/></svg></button>
    <button aria-label="Mirror"><svg class="i24"><use href="#mirror"/></svg></button>
  </div>
  <div class="grp icons tight sub">
    <button aria-label="Duplicate along line"><svg class="i24"><use href="#dmove"/></svg></button>
    <button aria-label="Duplicate around axis"><svg class="i24"><use href="#drot"/></svg></button>
    <button aria-label="Duplicate mirror"><svg class="i24"><use href="#dmirror"/></svg></button>
  </div>
  <div class="grp g-bool sub">
    <button disabled><svg class="i24"><use href="#unite"/></svg>Unite</button>
    <button disabled><svg class="i24"><use href="#subtract"/></svg>Subtract</button>
    <button disabled><svg class="i24"><use href="#intersect"/></svg>Intersect</button>
    <button><svg class="i24"><use href="#split"/></svg>Split</button>
    <button disabled><svg class="i24"><use href="#imprint"/></svg>Imprint</button>
  </div>
  <div class="grp icons sub">
    <button aria-label="Sweep along vector"><svg class="i24"><use href="#sheet1"/></svg></button>
    <button aria-label="Sweep around axis"><svg class="i24"><use href="#sheet2"/></svg></button>
    <button aria-label="Wrap sheet"><svg class="i24"><use href="#sheet3"/></svg></button>
  </div>
  <div class="grp g-fillet sub">
    <button disabled><svg class="i24"><use href="#fillet"/></svg>Fillet</button>
    <button disabled><svg class="i24"><use href="#chamfer"/></svg>Chamfer</button>
  </div>
  <div class="grp g-surf sub">
    <button aria-label="Surface"><svg class="i24"><use href="#surf"/></svg><i class="caret"></i></button>
    <button aria-label="Face"><svg class="i24"><use href="#face"/></svg><i class="caret"></i></button>
    <button aria-label="Edge"><svg class="i24"><use href="#edge"/></svg><i class="caret"></i></button>
  </div>
  <div class="grp g-cs">
    <button aria-label="Relative coordinate system"><svg class="i24"><use href="#cs1"/></svg><i class="caret"></i></button>
    <button aria-label="Face coordinate system"><svg class="i24"><use href="#cs2"/></svg></button>
    <button aria-label="Object coordinate system"><svg class="i24"><use href="#cs3"/></svg><i class="caret"></i></button>
  </div>
  <div class="grp g-measure">
    <button><svg class="i24"><use href="#measure"/></svg>Measure<i class="caret"></i></button>
    <button class="on"><svg class="i24"><use href="#ruler"/></svg>Ruler</button>
    <button>Units</button>
  </div>
  <div class="grp g-grid">
    <button class="on"><svg class="i24"><use href="#grid"/></svg>Grid</button>
    <span class="combo"><select aria-label="Drawing plane"><option>XY</option></select></span>
    <span class="combo"><select aria-label="Movement mode"><option>3D</option></select></span>
  </div>
  <div class="grp icons g-snap">
    <button class="on" aria-label="Snap grid"><svg class="i24"><use href="#snap1"/></svg></button>
    <button class="on" aria-label="Snap vertex"><svg class="i24"><use href="#snap3"/></svg></button>
    <button class="on" aria-label="Snap edge center"><svg class="i24"><use href="#snap5"/></svg></button>
    <button class="on" aria-label="Snap face center"><svg class="i24"><use href="#snap2"/></svg></button>
    <button class="on" aria-label="Snap edge"><svg class="i24"><use href="#snap4"/></svg></button>
    <button aria-label="Snap quadrant"><svg class="i24"><use href="#snap6"/></svg></button>
  </div>
  <div class="grp g-mat">
    <span class="combo"><select aria-label="Object type"><option>Model</option></select></span>
    <span class="combo"><select aria-label="Default material"><option>vacuum</option></select></span>
    <button disabled><svg class="i24"><use href="#material"/></svg>Material</button>
  </div>
</section>

<nav class="tabs">
  <button>Desktop</button><button>View</button><button class="active">Draw</button><button>Model</button><button>Simulation</button><button>Results</button><button>Automation</button>
  <div class="tabicons"><button aria-label="Help"><svg class="i24"><use href="#help"/></svg></button><button aria-label="Ansys"><svg class="i24"><use href="#ansys"/></svg></button></div>
</nav>

<main class="work">
  <div class="left">
    <section class="panel project">
      <header class="phead"><h2>Project Manager</h2><button aria-label="Pin"><svg width="12" height="16"><use href="#pin"/></svg></button><button aria-label="Close"><svg width="16" height="16"><use href="#x"/></svg></button></header>
      <ul class="tree small">
        <li><div class="row"><span class="lead"><button class="exp" aria-label="Collapse"></button></span><svg class="i16"><use href="#t-proj"/></svg><b>Project4*</b></div>
          <ul>
            <li><div class="row"><span class="lead"><button class="exp" aria-label="Collapse"></button></span><svg class="i16"><use href="#t-hfss"/></svg><b>HFSSDesign1 (DrivenTerminal)*</b></div>
              <ul>
                <li><div class="row"><span class="lead"></span><svg class="i16"><use href="#t-comps"/></svg><span>3D Components</span></div></li>
                <li><div class="row"><span class="lead"></span><svg class="i16"><use href="#t-model"/></svg><span>Model</span></div></li>
                <li><div class="row"><span class="lead"><button class="exp" aria-label="Collapse"></button></span><svg class="i16"><use href="#t-bound"/></svg><span>Boundaries</span></div>
                  <ul>
                    <li><div class="row"><span class="lead"></span><svg class="i16"><use href="#t-bound"/></svg><span>PerfE1</span></div></li>
                    <li><div class="row"><span class="lead"></span><svg class="i16"><use href="#t-bound"/></svg><span>Rad1</span></div></li>
                  </ul></li>
                <li><div class="row"><span class="lead"><button class="exp" aria-label="Collapse"></button></span><svg class="i16"><use href="#t-exc"/></svg><span>Excitations</span></div>
                  <ul>
                    <li><div class="row"><span class="lead"><button class="exp" aria-label="Collapse"></button></span><svg class="i16"><use href="#t-exc"/></svg><span class="dim">1</span></div>
                      <ul><li><div class="row"><span class="lead"></span><svg class="i16"><use href="#t-term"/></svg><span>Rectangle2_T1</span></div></li></ul></li>
                  </ul></li>
                <li><div class="row"><span class="lead"></span><svg class="i16"><use href="#t-hyb"/></svg><span>Hybrid Regions</span></div></li>
                <li><div class="row"><span class="lead"></span><svg class="i16"><use href="#t-mesh"/></svg><span>Mesh Operations</span></div></li>
                <li><div class="row"><span class="lead"><button class="exp plus" aria-label="Expand"></button></span><svg class="i16"><use href="#t-ana"/></svg><span>Analysis</span></div></li>
                <li><div class="row"><span class="lead"></span><svg class="i16"><use href="#t-opt"/></svg><span>Optimetrics</span></div></li>
                <li><div class="row"><span class="lead"><button class="exp plus" aria-label="Expand"></button></span><svg class="i16"><use href="#t-res"/></svg><span>Results</span></div></li>
                <li><div class="row"><span class="lead"><button class="exp plus" aria-label="Expand"></button></span><svg class="i16"><use href="#t-port"/></svg><span>Port Field Display</span></div></li>
                <li><div class="row"><span class="lead"></span><svg class="i16"><use href="#t-over"/></svg><span>Field Overlays</span></div></li>
                <li><div class="row"><span class="lead"><button class="exp plus" aria-label="Expand"></button></span><svg class="i16"><use href="#t-rad"/></svg><span>Radiation</span></div></li>
              </ul></li>
            <li><div class="row"><span class="lead"><button class="exp plus" aria-label="Expand"></button></span><svg class="i16"><use href="#t-fold"/></svg><span>Definitions</span></div></li>
          </ul></li>
      </ul>
    </section>
    <div class="split-h"></div>
    <section class="panel props">
      <header class="phead"><h2>Properties</h2><button aria-label="Pin"><svg width="12" height="16"><use href="#pin"/></svg></button><button aria-label="Close"><svg width="16" height="16"><use href="#x"/></svg></button></header>
      <div class="frame">
        <div class="sheet">
          <table class="ptable">
            <thead><tr><th>Name</th><th>Value</th></tr></thead>
            <tbody>
              <tr><td>Name</td><td>Rectangle2</td></tr>
              <tr><td>Orientation</td><td>Global</td></tr>
              <tr><td>Model</td><td class="mid"><input class="ck" type="checkbox" checked aria-label="Model"></td></tr>
              <tr><td>Group</td><td>Model</td></tr>
              <tr><td>Display Wireframe</td><td class="mid"><input class="ck" type="checkbox" aria-label="Display Wireframe"></td></tr>
              <tr><td>Material Appearance</td><td class="mid"><input class="ck" type="checkbox" aria-label="Material Appearance"></td></tr>
              <tr><td>Color</td><td class="cell"><button class="swatch" aria-label="Color"></button></td></tr>
              <tr><td>Transparent</td><td class="cell"><button class="raised">0</button></td></tr>
            </tbody>
          </table>
          <div class="hscroll"><svg width="9" height="12"><path d="M7 1L2 6l5 5" fill="none" stroke="#555" stroke-width="2.500"/></svg><div class="track"><div class="thumb"></div></div><svg width="9" height="12"><path d="M2 1l5 5-5 5" fill="none" stroke="#555" stroke-width="2.500"/></svg></div>
        </div>
        <div class="tabline"><button>Attribute</button><span></span></div>
      </div>
    </section>
  </div>
  <div class="split-v"></div>
  <section class="mtree">
    <ul class="tree rooted">
      <li><div class="row"><span class="lead"><button class="exp" aria-label="Collapse"></button></span><svg class="i16"><use href="#t-model"/></svg><span>Model</span></div>
        <ul>
          <li><div class="row"><span class="lead"><button class="exp" aria-label="Collapse"></button></span><svg class="i16"><use href="#t-solid"/></svg><span>Solids</span></div>
            <ul>
              <li><div class="row"><span class="lead"><button class="exp plus" aria-label="Expand"></button></span><svg class="i16"><use href="#t-mat"/></svg><span>silver</span></div></li>
              <li><div class="row"><span class="lead"><button class="exp plus" aria-label="Expand"></button></span><svg class="i16"><use href="#t-mat"/></svg><span>vacuum</span></div></li>
            </ul></li>
          <li><div class="row"><span class="lead"><button class="exp" aria-label="Collapse"></button></span><svg class="i16"><use href="#t-sheet"/></svg><span>Sheets</span></div>
            <ul>
              <li><div class="row"><span class="lead"><button class="exp" aria-label="Collapse"></button></span><svg class="i16"><use href="#t-sheet"/></svg><span>Lumped Port</span></div>
                <ul><li><div class="row"><span class="lead"><button class="exp plus" aria-label="Expand"></button></span><svg class="i16"><use href="#t-sheet"/></svg><span class="sel">Rectangle2</span></div></li></ul></li>
              <li><div class="row"><span class="lead"><button class="exp" aria-label="Collapse"></button></span><svg class="i16"><use href="#t-sheet"/></svg><span>Perfect E</span></div>
                <ul><li><div class="row"><span class="lead"><button class="exp" aria-label="Collapse"></button></span><svg class="i16"><use href="#t-sheet"/></svg><span>Rectangle1</span></div>
                  <ul>
                    <li><div class="row"><span class="lead"></span><svg class="i16"><use href="#t-create"/></svg><span>CreateRectangle</span></div></li>
                    <li><div class="row"><span class="lead"></span><svg class="i16"><use href="#t-cover"/></svg><span>CoverLines</span></div></li>
                    <li><div class="row"><span class="lead"><button class="exp plus" aria-label="Expand"></button></span><svg class="i16"><use href="#t-sub"/></svg><span>Subtract</span></div></li>
                  </ul></li></ul></li>
            </ul></li>
        </ul></li>
      <li><div class="row"><span class="lead"><button class="exp" aria-label="Collapse"></button></span><svg class="i16"><use href="#t-cs"/></svg><span>Coordinate Systems</span></div>
        <ul><li><div class="row"><span class="lead"></span><svg class="i16"><use href="#t-glob"/></svg><span>Global</span></div></li></ul></li>
      <li><div class="row"><span class="lead"><button class="exp plus" aria-label="Expand"></button></span><svg class="i16"><use href="#t-plane"/></svg><span>Planes</span></div></li>
      <li><div class="row"><span class="lead"><button class="exp plus" aria-label="Expand"></button></span><svg class="i16"><use href="#t-list"/></svg><span>Lists</span></div></li>
    </ul>
  </section>
  <section class="viewport">
    <svg width="100%" height="100%">
      <defs>
        <g id="rows" fill="none"><path stroke="#a9b2cc" d="M0 0l1063 181"/><path stroke="#cdd4da" d="M0 21l1063 181M0 43l1063 181M0 64l1063 181M0 86l1063 181"/></g>
        <g id="cols" fill="none"><path stroke="#a9b2cc" d="M0 0l-726 1140"/><path stroke="#cdd4da" d="M40 0l-726 1140M80 0l-726 1140M120 0l-726 1140M160 0l-726 1140"/></g>
      </defs>
      <rect width="100%" height="100%" fill="#e9eee9"/>
      <use href="#rows" y="-232"/><use href="#rows" y="-125"/><use href="#rows" y="-18"/><use href="#rows" y="89"/><use href="#rows" y="196"/><use href="#rows" y="303"/><use href="#rows" y="410"/><use href="#rows" y="517"/><use href="#rows" y="624"/><use href="#rows" y="731"/><use href="#rows" y="838"/><use href="#rows" y="945"/><use href="#rows" y="1052"/>
      <use href="#cols" x="-36"/><use href="#cols" x="164"/><use href="#cols" x="364"/><use href="#cols" x="564"/><use href="#cols" x="764"/><use href="#cols" x="964"/><use href="#cols" x="1164"/><use href="#cols" x="1364"/><use href="#cols" x="1564"/><use href="#cols" x="1764"/>
      <path fill="#465f46" fill-opacity=".07" d="M162 0L0 262V840L761 971 1062 490V0z"/>
      <path fill="#fff" fill-opacity=".3" d="M217 555L337 362V523L308 572z"/>
      <path fill="#466f46" fill-opacity=".1" d="M337 0H700V920L217 826V555L308 572 337 523z"/>
      <path fill="none" stroke="#3d5a3d" d="M162 0L0 262M0 840l307 53M337 0v580M445 674L371 792M371 852l74 12M1062 490L986 612"/>
      <path fill="none" stroke="#f2f2ea" d="M337 469l108 19"/>
      <path fill="none" stroke="#1c8a1c" stroke-width="2" d="M132 541l85 14 91 16M986 693l60 10"/>
      <path fill="#e4188c" stroke="#c01020" d="M337 523l108 19v54l-137-24z"/>
      <g fill="none"><path stroke="#94609a" stroke-width="3" d="M445 190L217 555v322M217 555l91 16M371 630l74-117"/><path stroke="#b83cb8" stroke-width="3" d="M307 893l138 25"/><path stroke="#22b022" stroke-width="2" d="M445 190L217 555v322M217 555l91 16M307 893l138 25M371 630l74-117"/><path stroke="#b09070" stroke-width="2" d="M308 572l137 24"/><path stroke="#a8b8d0" stroke-width="3" d="M399 586l42-65"/></g>
      <text x="410" y="563" class="vlabel">1</text>
      <path fill="#18a018" d="M1037 696l20 9-20 7z"/><text x="1053" y="706" class="axis" fill="#188018">Y</text>
      <path d="M1001 1077v-30" stroke="#2a50c8" stroke-width="3"/><path fill="#2a50c8" d="M1001 1038l4 12h-8z"/>
      <path d="M1001 1077l26 4" stroke="#0a7a0a"/><path fill="#0a7a0a" d="M1026 1077l12 5-12 4z"/>
      <path d="M1001 1077l-8 12" stroke="#e01010" stroke-width="2"/><path fill="#e01010" d="M990 1086l8-1-4 5 4 6-5-2-5 4 1-7-2-4z"/>
      <text x="1001" y="1039" class="axis" fill="#2a50c8">Z</text><text x="1044" y="1086" class="axis" fill="#0a7a0a">Y</text>
      <rect x="337.500" y="1108.500" width="387" height="15" fill="#fff" stroke="#000"/><path d="M531 1108h194v16H531z"/>
      <g class="scale"><text x="337" y="1133">0</text><text x="531" y="1133">0.05</text><text x="741" y="1133">0.1 (mm)</text></g>
    </svg>
  </section>
  <div class="split-v"></div>
  <section class="panel comps">
    <header class="phead"><h2>Compon...</h2><button aria-label="Pin"><svg width="12" height="16"><use href="#pin"/></svg></button><button aria-label="Close"><svg width="16" height="16"><use href="#x"/></svg></button></header>
    <div class="frame">
      <div class="sheet">
        <ul class="tree rooted">
          <li><div class="row"><span class="lead"></span><svg class="i16"><use href="#t-fav"/></svg><span class="dim">Favorites</span></div></li>
          <li><div class="row"><span class="lead"></span><svg class="i16"><use href="#t-fav"/></svg><span>Most Recently Used</span></div></li>
          <li><div class="row"><span class="lead"><button class="exp" aria-label="Collapse"></button></span><svg class="i16"><use href="#t-comps"/></svg><span>HFSS Components</span></div>
            <ul>
              <li><div class="row"><span class="lead"><button class="exp plus" aria-label="Expand"></button></span><svg class="i16"><use href="#t-dir"/></svg><span>Antennas</span></div></li>
              <li><div class="row"><span class="lead"><button class="exp plus" aria-label="Expand"></button></span><svg class="i16"><use href="#t-dir"/></svg><span>Human</span></div></li>
              <li><div class="row"><span class="lead"><button class="exp plus" aria-label="Expand"></button></span><svg class="i16"><use href="#t-dir"/></svg><span>Johanson</span></div></li>
              <li><div class="row"><span class="lead"><button class="exp plus" aria-label="Expand"></button></span><svg class="i16"><use href="#t-dir"/></svg><span>Rectangular</span></div></li>
              <li><div class="row"><span class="lead"><button class="exp plus" aria-label="Expand"></button></span><svg class="i16"><use href="#t-dir"/></svg><span>Surface</span></div></li>
            </ul></li>
        </ul>
        <div class="hscroll"><svg width="9" height="12"><path d="M7 1L2 6l5 5" fill="none" stroke="#555" stroke-width="2.500"/></svg><div class="track"><div class="thumb"></div></div><svg width="9" height="12"><path d="M2 1l5 5-5 5" fill="none" stroke="#555" stroke-width="2.500"/></svg></div>
      </div>
      <div class="tabline"><button>Components</button><span></span></div>
    </div>
  </section>
</main>

<footer class="status">
  <span>Assign a Lumped Port Excitation</span>
  <button><svg width="12" height="10"><path fill="#f8f080" stroke="#8a8a30" d="M.5 1.500h11v8H.500z"/><path fill="#555" d="M5 4h3v3H5z"/></svg>Show 0 Messages</button>
  <button><svg width="12" height="10"><path fill="#10c020" d="M0 3h7v3H0z"/><path fill="#aaa" d="M7 3h4v2H7z"/></svg>Show Progress</button>
</footer>

<menu class="popup main-popup">
  <li><button>Expand All</button></li>
  <li><button>Collapse All</button></li>
  <li class="sep"></li>
  <li><button>Select<svg class="chev"><use href="#chev"/></svg></button></li>
  <li class="sep"></li>
  <li><button>Edit<svg class="chev"><use href="#chev"/></svg></button></li>
  <li class="sep"></li>
  <li><button>Group<svg class="chev"><use href="#chev"/></svg></button></li>
  <li><button>Create 3D Component...</button></li>
  <li class="sep"></li>
  <li class="short"><button disabled><svg class="i16"><use href="#t-matg"/></svg>Assign Material...</button></li>
  <li class="sep"></li>
  <li><button>View<svg class="chev"><use href="#chev"/></svg></button></li>
  <li><button>Properties...</button></li>
  <li><button disabled>Create Array ...</button></li>
  <li class="sep"></li>
  <li><button>Create Open Region ...</button></li>
  <li><button>Update Open Region Padding...</button></li>
  <li class="sep"></li>
  <li><button>Assign Boundary<svg class="chev"><use href="#chev"/></svg></button></li>
  <li><button class="hot">Assign Excitation<svg class="chev"><use href="#chev"/></svg></button></li>
  <li><button>Assign Hybrid<svg class="chev"><use href="#chev"/></svg></button></li>
  <li><button>Assign Mesh Operation<svg class="chev"><use href="#chev"/></svg></button></li>
  <li class="sep"></li>
  <li><button>Plot Fields<svg class="chev"><use href="#chev"/></svg></button></li>
  <li class="sep"></li>
  <li><button>Plot Mesh...</button></li>
  <li class="sep"></li>
  <li><button>Plot VRT...</button></li>
</menu>
<menu class="popup sub-popup">
  <li><button>Wave Port...</button></li>
  <li><button class="hot">Lumped Port...</button></li>
  <li><button disabled>Floquet Port...</button></li>
  <li><button>Terminal...</button></li>
  <li><button>Incident Wave<svg class="chev"><use href="#chev"/></svg></button></li>
  <li><button>Linked Field<svg class="chev"><use href="#chev"/></svg></button></li>
  <li><button>Voltage...</button></li>
  <li><button>Current...</button></li>
  <li><button>Magnetic Bias...</button></li>
</menu>

<section class="dialog" role="dialog" aria-labelledby="dlg-title">
  <header><svg class="docicon"><use href="#doc"/></svg><h2 id="dlg-title">Reference Conductors for Terminals</h2><button aria-label="Close"><svg width="16" height="16"><path d="M0 0l16 16M16 0L0 16" stroke="#000"/></svg></button></header>
  <form>
    <div class="portname"><label for="port">Port Name:</label><input id="port" type="text" value="1"></div>
    <fieldset>
      <legend>Terminal Naming</legend>
      <label><input type="radio" name="naming" checked>Use conductor name</label>
      <label><input type="radio" name="naming">Use port object name</label>
    </fieldset>
    <p class="note">NOTE: Multiple reference conductors touching a<br>port must all be connected in the plane of the port.</p>
    <div class="ctbox">
      <table class="ctable">
        <thead><tr><th></th><th>Conductor</th><th>Use as Reference</th></tr></thead>
        <tbody>
          <tr><th></th><td>Box3</td><td class="mid"><input class="ck" type="checkbox" aria-label="Box3 as reference"></td></tr>
          <tr><th></th><td>Rectangle1</td><td class="mid"><input class="ck" type="checkbox" checked aria-label="Rectangle1 as reference"></td></tr>
        </tbody>
      </table>
    </div>
    <label class="hl"><input type="checkbox" class="ck" checked>Highlight selected conductors</label>
    <div class="actions"><button type="button">OK</button><button type="button">Cancel</button></div>
  </form>
</section>
<svg class="arrow" width="210" height="660" aria-hidden="true"><path d="M16 634L191 19" stroke="#ee1c25" stroke-width="6"/><circle cx="16" cy="634" r="3" fill="#ee1c25"/><path fill="#ee1c25" d="M196 0l4 25-9-6-11 1z"/></svg>
</body>
</html>
```
FILE: styles.css
```css
* { box-sizing: border-box; }
html, body { height: 100%; }
body {
  margin: 0;
  display: flex;
  flex-direction: column;
  position: relative;
  overflow: hidden;
  background: #f0f0f0;
  color: #000;
  font: 18px/24px "Open Sans", "Noto Sans", sans-serif;
}
h1, h2, p, ul, menu { margin: 0; padding: 0; font-size: inherit; font-weight: normal; }
ul, menu { list-style: none; }
button {
  display: flex;
  align-items: center;
  padding: 0;
  border: 0;
  background: none;
  color: inherit;
  font: inherit;
  white-space: nowrap;
}
svg { display: block; flex: none; }
.sprite { position: absolute; width: 0; height: 0; }
.i24 { width: 24px; height: 24px; }
.i16 { width: 16px; height: 16px; }
.docicon { width: 24px; height: 20px; }

/* title and menus */
.titlebar { display: flex; align-items: center; gap: 5px; height: 34px; padding-left: 2px; background: #fff; flex: none; }
.titlebar h1 { white-space: nowrap; font-size: 19px; }
.winbtns { display: flex; gap: 54px; margin-left: auto; padding-right: 28px; }
.menubar { display: flex; align-items: center; gap: 16px; height: 30px; padding-left: 7px; background: #fff; border-bottom: 1px solid #f0f0f0; flex: none; }
.menubar button { padding-bottom: 2px; }
.menubar .docicon { margin-right: -9px; }
.mdibtns { display: flex; gap: 1px; margin-left: auto; }
.mdibtns button { width: 28px; height: 28px; justify-content: center; border: 1px solid #e2e2e6; }

/* ribbon */
.ribbon { display: flex; height: 112px; flex: none; background: #efeef2; border: 1px solid #c8c8dc; color: #1a1a1a; }
.grp {
  display: grid;
  grid-auto-flow: column;
  grid-template-rows: repeat(3, 30px);
  align-content: start;
  justify-items: start;
  flex: none;
  padding-top: 4px;
  border-right: 1px solid;
  border-image: linear-gradient(transparent 3px, #c8c8dc 3px 107px, transparent 107px) 1;
}
.grp.sub { border-image: linear-gradient(transparent 9px, #7c8ba0 9px 101px, transparent 101px) 1; }
.grp button { height: 30px; gap: 3px; padding-bottom: 2px; }
.grp button:disabled { color: #8c8c8c; }
.grp .on { background: #cccccc; }
.grp .big { grid-row: span 3; flex-direction: column; height: 90px; padding-top: 4px; justify-self: center; gap: 7px; }
.grp .wide { margin-top: 2px; }
.icons { grid-auto-columns: 34px; padding-left: 4px; padding-right: 5px; }
.icons button { width: 34px; justify-content: center; }
.icons.tight { padding-left: 4px; padding-right: 1px; }
.caret { width: 0; height: 0; margin-left: 1px; border: 4px solid transparent; border-top: 5px solid #666; border-bottom: 0; }
.caret.wide { margin-left: 0; border-width: 6px 7px 0; }
.g-edit { grid-template-columns: 65px 77px 90px; padding-left: 2px; }
.g-edit .big { padding-top: 5px; gap: 6px; }
.g-select { padding-left: 8px; width: 179px; }
.field { display: flex; align-items: center; gap: 3px; }
.combo { display: flex; position: relative; }
.combo::after { content: ""; position: absolute; right: 6px; top: 12px; border: 4px solid transparent; border-top: 5px solid #666; border-bottom: 0; pointer-events: none; }
.combo select { appearance: none; width: 109px; height: 29px; padding: 0 2px 2px; border: 1px solid #d6d6de; border-radius: 0; background: #fff; color: #1a1a1a; font: inherit; }
.g-eyes { padding-right: 11px; }
.g-zoom { grid-template-columns: 67px 102px; }
.g-zoom .big { padding-top: 3px; gap: 3px; }
.g-fit { padding-left: 8px; width: 141px; }
.g-bool { grid-template-columns: 104px 94px; padding-left: 8px; }
.g-fillet { padding-left: 9px; width: 112px; }
.g-surf { padding-left: 9px; width: 51px; }
.g-cs { padding-left: 9px; width: 56px; }
.g-measure { padding-left: 6px; width: 128px; }
.g-measure button { padding: 0 4px 2px 3px; }
.g-grid { padding-left: 6px; width: 106px; }
.g-grid button { padding: 0 4px 2px 3px; }
.g-grid select { width: 95px; }
.g-snap { padding-left: 6px; padding-right: 4px; }
.g-mat { padding-left: 7px; width: 129px; }
.g-mat select { width: 117px; }

.tabs { display: flex; height: 30px; padding: 0 0 4px 2px; color: #444; font-size: 17px; flex: none; }
.tabs > button { padding: 0 15px 2px; }
.tabs > .active { background: #f2f2f5; border: 1px solid #c8c8dc; border-top: 0; color: #005a9e; }
.tabicons { display: flex; gap: 8px; margin-left: auto; padding-right: 3px; }

/* work area */
.work { display: flex; flex: 1; min-height: 0; }
.left { display: flex; flex-direction: column; width: 473px; flex: none; }
.panel { display: flex; flex-direction: column; background: #fff; min-height: 0; }
.phead { display: flex; align-items: center; height: 32px; padding: 0 7px 0 4px; gap: 13px; flex: none; background: linear-gradient(#dadde2, #bcc0c6); border-bottom: 1px solid #a8a8a8; font-size: 17px; }
.phead h2 { flex: 1; white-space: nowrap; padding-bottom: 2px; }
.project { flex: 571 1 0; }
.props { flex: 564 1 0; background: #f0f0f0; }
.split-v { width: 7px; flex: none; background: repeating-conic-gradient(#46557a 0 25%, #8a8a8a 0 50%) 0 0 / 4px 4px; }
.split-h { height: 6px; flex: none; background: repeating-conic-gradient(#46557a 0 25%, #8a8a8a 0 50%) 0 0 / 4px 4px; }

.tree { flex: 1; --h: 26px; overflow: hidden; white-space: nowrap; }
.tree ul { padding-left: 26px; }
.tree.small { --h: 24px; font-size: 15px; }
.tree.small b { font-size: 17px; }
.tree li { background: repeating-linear-gradient(#808080 0 1px, transparent 1px 2px) 8px 0 / 1px 100% no-repeat; }
.tree li:last-child { background-size: 1px calc(var(--h) / 2); }
.tree.small > li { background: none; }
.tree.rooted > li:first-child { background-position: 8px 13px; }
.row { display: flex; align-items: center; height: var(--h); }
.row > :last-child { margin-left: 1px; padding: 0 3px; line-height: var(--h); }
.lead { display: flex; align-items: center; width: 26px; height: 9px; padding-left: 4px; flex: none; background: repeating-linear-gradient(90deg, #808080 0 1px, transparent 1px 2px) 8px 4px / 16px 1px no-repeat; }
.exp { width: 9px; height: 9px; border: 1px solid #808080; background: linear-gradient(#000, #000) 1px 3px / 5px 1px no-repeat, #fff; }
.exp.plus { background: linear-gradient(#000, #000) 1px 3px / 5px 1px no-repeat, linear-gradient(#000, #000) 3px 1px / 1px 5px no-repeat, #fff; }
.dim { background: #f0f0f0; }
.sel { background: #0078d7; color: #fff; outline: 1px dotted #e08030; outline-offset: -1px; }

.mtree { display: flex; width: 453px; flex: none; padding-left: 1px; background: #fff; border-top: 2px solid #696969; border-left: 1px solid #696969; }
.viewport { flex: 1; min-width: 0; margin-left: 5px; border-top: 2px solid #696969; border-left: 2px solid #696969; overflow: hidden; }
.vlabel { font: bold 12px "Liberation Serif", serif; }
.axis { font: bold 12px "Liberation Mono", monospace; }
.scale { font: 12px "Liberation Sans", sans-serif; text-anchor: middle; }

/* framed panels */
.frame { display: flex; flex-direction: column; flex: 1; min-height: 0; margin: 4px 4px 7px 4px; padding: 3px 3px 0 3px; border: 1px solid #fff; border-right: 2px solid #696969; }
.sheet { display: flex; flex-direction: column; flex: 1; min-height: 0; overflow: hidden; border: 2px solid #808080; border-right: 1px solid #e3e3e3; border-bottom: 2px solid #e3e3e3; background: #fff; }
.props .sheet { font-size: 19px; line-height: 26px; }
.tabline { display: flex; height: 18px; flex: none; margin: 2px -3px 0; }
.tabline button { height: 19px; padding: 0 6px 0 7px; border: 1px solid #696969; border-width: 0 2px 1px 0; font-size: 19px; line-height: 18px; }
.tabline span { flex: 1; height: 16px; border: 2px solid #696969; border-right: 0; }
.hscroll { display: flex; align-items: center; gap: 9px; height: 24px; margin-top: auto; padding: 0 8px; flex: none; background: #f0f0f0; }
.track { flex: 1; height: 24px; }
.thumb { width: 71%; height: 24px; background: #cdcdcd; }
.ptable { width: 498px; table-layout: fixed; border-spacing: 0; }
.ptable th:first-child { width: 279px; }
.ptable th { height: 31px; padding: 0 0 2px; background: #f0f0f0; font-weight: normal; border: 1px solid #808080; border-width: 0 2px 2px 0; }
.ptable td { height: 31px; padding: 0 3px 2px; border: 1px solid #c0c0c0; border-width: 0 1px 1px 0; }
.ptable td.mid { padding: 0; line-height: 24px; }
.mid { text-align: center; }
.ck { appearance: none; display: inline-grid; place-items: center; vertical-align: middle; width: 24px; height: 24px; margin: 0; background: #fff; border: 3px solid; border-color: #808080 #e3e3e3 #e3e3e3 #808080; }
.ck:checked::before { content: ""; width: 12px; height: 11px; background: #000; clip-path: polygon(0 30%, 35% 62%, 100% 0, 100% 38%, 38% 100%, 0 66%); }
.ptable td.cell { padding: 2px 3px; }
.swatch { width: 212px; height: 24px; margin-left: 3px; border: 1px solid #000; background: #90ae90; }
.raised { width: 100%; height: 26px; justify-content: center; background: #f0f0f0; border: 1px solid #e3e3e3; border-bottom: 2px solid #696969; }
.comps { width: 150px; flex: none; background: #f0f0f0; }
.comps .phead { gap: 10px; padding-right: 6px; }
.comps .frame { padding: 2px 4px 0 1px; }
.comps .sheet { border: 0; padding: 2px 0 0 1px; }
.comps .hscroll { gap: 8px; }
.comps .thumb { width: 40%; }
.comps .tabline { margin: 2px -4px 0 -1px; }
.comps .tabline span { border-width: 2px 0 0; }

.status { display: flex; align-items: end; gap: 6px; height: 28px; flex: none; padding-left: 5px; background: #ccd3dc; font-size: 17px; }
.status span { flex: 1; line-height: 24px; }
.status button { gap: 13px; height: 25px; padding: 0 10px 0 8px; border: 1px solid #a0a8b0; border-bottom: 0; background: #cfd5dc; font: 15px/20px "Liberation Mono", monospace; }

/* context menus */
.popup { position: absolute; padding: 2px; background: #f1f1f1; border: 1px solid #c0c0c0; box-shadow: 4px 4px 4px rgba(0, 0, 0, .5); font-size: 19px; }
.popup button { width: 100%; height: 31px; padding: 0 9px 2px 41px; }
.popup .short button { height: 26px; padding-left: 11px; gap: 14px; }
.popup button:disabled { color: #7a7a7a; }
.popup .hot { background: #91c9f7; }
.chev { width: 8px; height: 12px; margin-left: auto; }
.sep { height: 7px; padding: 3px 0; margin-left: 37px; background: #d4d4d4; background-clip: content-box; }
.main-popup { left: 682px; top: 371px; width: 390px; }
.sub-popup { left: 1067px; top: 818px; width: 244px; }

/* dialog */
.dialog { position: absolute; left: 1385px; top: 192px; width: 541px; height: 1048px; background: #f0f0f0; border: 1px solid #606060; box-shadow: 0 3px 20px rgba(0, 0, 0, .4); }
.dialog header { display: flex; align-items: center; gap: 5px; height: 44px; padding: 0 17px 0 11px; background: #fff; }
.dialog header h2 { flex: 1; }
.dialog form { display: flex; flex-direction: column; padding: 25px 26px 0 22px; height: 1002px; font: 19px/24px "Liberation Sans", sans-serif; }
.portname { display: flex; justify-content: space-between; align-items: center; padding-left: 17px; }
.portname input { width: 318px; height: 42px; padding: 2px 3px 14px; border: 2px solid; border-color: #808080 #fff #fff #808080; font: inherit; background: #fff; }
.dialog fieldset { display: flex; flex-direction: column; gap: 21px; margin: 10px 0 15px; padding: 16px 0 16px 66px; min-height: 128px; border: 1px solid #a0a0a0; }
.dialog legend { margin-left: -57px; padding: 0 2px; }
fieldset label { display: flex; align-items: center; gap: 8px; }
input[type=radio] { appearance: none; display: grid; place-items: center; width: 15px; height: 15px; margin: 0 0 0 1px; border: 2px solid; border-color: #808080 #fff #fff #808080; border-radius: 50%; background: #fff; }
input[type=radio]:checked::before { content: ""; width: 8px; height: 8px; border-radius: 50%; background: #000; }
.note { height: 74px; padding: 9px 13px; border: 1px solid #a0a0a0; white-space: nowrap; }
.ctbox { flex: 1; margin: 19px -1px 0 0; background: #fff; border: 1px solid #696969; }
.ctable { width: 100%; table-layout: fixed; border-spacing: 0; font-size: 11px; line-height: 12px; }
.ctable th, .ctable td { height: 31px; padding: 3px 2px; vertical-align: top; text-align: left; border: 1px solid #c0c0c0; border-width: 0 1px 1px 0; }
.ctable th { background: #f0f0f0; border-color: #696969; font-weight: normal; text-align: center; }
.ctable th:first-child { width: 20px; }
.ctable th:nth-child(3) { width: 97px; padding: 3px 0; }
.ctable td.mid { text-align: center; }
.hl { display: flex; align-items: center; gap: 9px; margin: 38px 0 34px; }
.hl .ck { width: 16px; height: 16px; border-width: 2px; }
.actions { display: flex; gap: 64px; padding: 0 0 28px 69px; }
.actions button { width: 139px; height: 42px; justify-content: center; border: 2px solid; border-color: #fff #696969 #696969 #fff; }
.arrow { position: absolute; left: 1250px; top: 230px; pointer-events: none; }
```
